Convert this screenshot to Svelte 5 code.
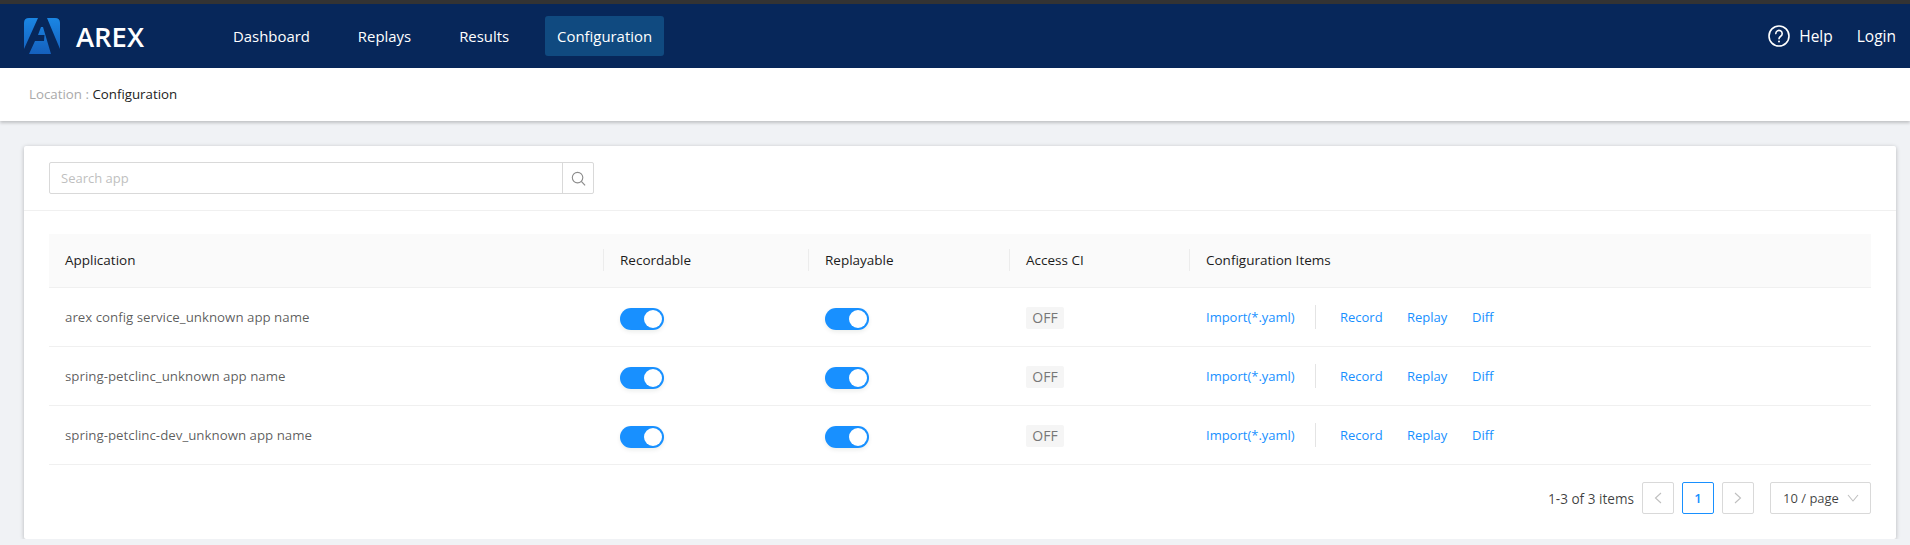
<script>
  const nav = ['Dashboard', 'Replays', 'Results', 'Configuration'];
  const apps = ['arex config service_unknown app name', 'spring-petclinc_unknown app name', 'spring-petclinc-dev_unknown app name'];
  const heads = ['Application', 'Recordable', 'Replayable', 'Access CI', 'Configuration Items'];
</script>

<div class="topline"></div>
<header class="navbar">
  <div class="brand">
    <svg class="logo" viewBox="0 0 36 36" width="36" height="36">
      <defs><linearGradient id="lg" x1="0" y1="0" x2="0" y2="1"><stop offset="0" stop-color="#1a86e4"/><stop offset="1" stop-color="#1560bd"/></linearGradient></defs>
      <path fill="url(#lg)" d="M5 0H14L0 31V5Q0 0 5 0ZM23 0H31Q36 0 36 5V31L23 0ZM11 23H20L20.500 17H14L17 9H19L27 36H5Z" />
    </svg>
    <span class="name">AREX</span>
  </div>
  <nav class="menu">
    {#each nav as item}
      <span class="item" class:active={item === 'Configuration'}>{item}</span>
    {/each}
  </nav>
  <div class="right">
    <svg width="22" height="22" viewBox="0 0 22 22" fill="none" stroke="#fff" stroke-width="1.6">
      <circle cx="11" cy="11" r="10"/>
      <path d="M7.8 8.6a3.2 3.2 0 1 1 4.9 2.7c-1.1.7-1.700 1.200-1.700 2.500" stroke-linecap="round"/>
      <circle cx="11" cy="16.4" r="1" fill="#fff" stroke="none"/>
    </svg>
    <span class="help">Help</span>
    <span class="login">Login</span>
  </div>
</header>
<div class="crumb"><span class="muted">Location :</span> <span>Configuration</span></div>

<main class="page">
  <section class="card">
    <div class="searchbar">
      <div class="search">
        <div class="input">Search app</div>
        <div class="btn">
          <svg width="15" height="15" viewBox="0 0 16 16" fill="none" stroke="#8c8c8c" stroke-width="1.2"><circle cx="7" cy="7" r="5.600"/><path d="M11 11l4 4.400"/></svg>
        </div>
      </div>
    </div>
    <div class="body">
      <div class="row head">
        {#each heads as h, i}
          <div class="cell" class:sep={i > 0}>{h}</div>
        {/each}
      </div>
      {#each apps as a}
        <div class="row">
          <div class="cell app">{a}</div>
          <div class="cell"><span class="switch"><i></i></span></div>
          <div class="cell"><span class="switch"><i></i></span></div>
          <div class="cell"><span class="tag">OFF</span></div>
          <div class="cell links">
            <span class="import">Import(*.yaml)</span>
            <span class="vline"></span>
            <span class="l1">Record</span>
            <span class="l2">Replay</span>
            <span>Diff</span>
          </div>
        </div>
      {/each}
      <div class="pager">
        <span class="total">1-3 of 3 items</span>
        <span class="pg"><svg width="10" height="12" viewBox="0 0 10 12" fill="none" stroke="#bfbfbf" stroke-width="1.1"><path d="M8 1L2.500 6 8 11"/></svg></span>
        <span class="pg cur">1</span>
        <span class="pg"><svg width="10" height="12" viewBox="0 0 10 12" fill="none" stroke="#bfbfbf" stroke-width="1.1"><path d="M2 1l5.500 5L2 11"/></svg></span>
        <span class="size">10 / page
          <svg width="12" height="8" viewBox="0 0 12 8" fill="none" stroke="#bfbfbf" stroke-width="1.1"><path d="M1 1l5 6 5-6"/></svg>
        </span>
      </div>
    </div>
  </section>
</main>

<style>
  :global(body) { margin: 0; background: #f0f2f5; font-family: "Open Sans", "Noto Sans", sans-serif; font-size: 13px; color: rgba(0,0,0,.65); overflow: hidden; }
  .topline { height: 4px; background: #333; }
  .navbar { height: 64px; background: #07275a; display: flex; align-items: center; color: #fff; }
  .brand { display: flex; align-items: center; padding-left: 24px; width: 221px; flex: none; box-sizing: border-box; }
  .name { margin-left: 16px; font-size: 27.4px; font-weight: 600; }
  .menu { display: flex; gap: 24px; font-size: 14.9px; }
  .item { height: 40px; line-height: 40px; padding: 0 12px; border-radius: 3px; }
  .active { background: #104a80; }
  .right { margin-left: auto; margin-right: 14px; display: flex; align-items: center; font-size: 15.5px; }
  .help { margin-left: 9px; }
  .login { margin-left: 24px; }
  .crumb { height: 53px; background: #fff; line-height: 53px; padding-left: 29px; box-shadow: 0 2px 3px rgba(0,0,0,.2); color: #222; font-size: 13.3px; position: relative; }
  .muted { color: #aaa; }
  .page { padding: 25px 14px 0 24px; }
  .card { background: #fff; height: 393px; box-shadow: 0 1px 4px rgba(0,0,0,.25); border-radius: 2px; }
  .searchbar { height: 65px; box-sizing: border-box; padding: 16px 25px; border-bottom: 1px solid #f0f0f0; }
  .search { display: flex; width: 545px; height: 32px; box-sizing: border-box; border: 1px solid #d9d9d9; border-radius: 2px; }
  .input { flex: 1; line-height: 30px; padding-left: 11px; color: #bfbfbf; border-right: 1px solid #d9d9d9; }
  .btn { width: 30px; display: flex; align-items: center; justify-content: center; }
  .body { padding: 23px 25px 0; }
  .row { display: grid; grid-template-columns: 555px 205px 201px 180px 1fr; height: 59px; border-bottom: 1px solid #f0f0f0; box-sizing: border-box; align-items: center; }
  .app { font-size: 13.3px; }
  .head { height: 54px; background: #fafafa; color: #1c1c1c; font-weight: 500; font-size: 13.5px; padding-bottom: 1px; }
  .cell { padding-left: 16px; position: relative; }
  .sep::before { content: ""; position: absolute; left: -1px; top: 50%; height: 22px; margin-top: -11px; width: 1px; background: #ececec; }
  .switch { display: block; width: 44px; height: 22px; margin-top: 3px; background: #1890ff; border-radius: 11px; position: relative; box-shadow: 0 2px 4px rgba(0,35,11,.08); }
  .switch i { position: absolute; right: 2px; top: 2px; width: 18px; height: 18px; background: #fff; border-radius: 50%; }
  .tag { display: block; width: 38px; height: 22px; line-height: 21px; margin-top: 1px; text-align: center; background: #f5f5f5; border-radius: 2px; color: #777; font-size: 14px; }
  .links { display: flex; align-items: center; color: #1890ff; }
  .import { width: 109px; }
  .vline { width: 1px; height: 24px; background: #e4e4e4; margin-right: 24px; }
  .l1 { width: 67px; }
  .l2 { width: 65px; }
  .pager { display: flex; align-items: center; justify-content: flex-end; margin-top: 17px; height: 32px; }
  .total { margin-right: 8px; color: rgba(0,0,0,.75); font-size: 13.6px; }
  .pg { width: 32px; height: 32px; box-sizing: border-box; border: 1px solid #d9d9d9; border-radius: 2px; margin-right: 8px; display: flex; align-items: center; justify-content: center; }
  .cur { border-color: #1890ff; color: #1890ff; font-weight: 600; }
  .size { width: 101px; height: 32px; margin-left: 8px; box-sizing: border-box; border: 1px solid #d9d9d9; border-radius: 2px; display: flex; align-items: center; justify-content: space-between; padding: 0 11px 0 12px; color: rgba(0,0,0,.75); }
</style>
